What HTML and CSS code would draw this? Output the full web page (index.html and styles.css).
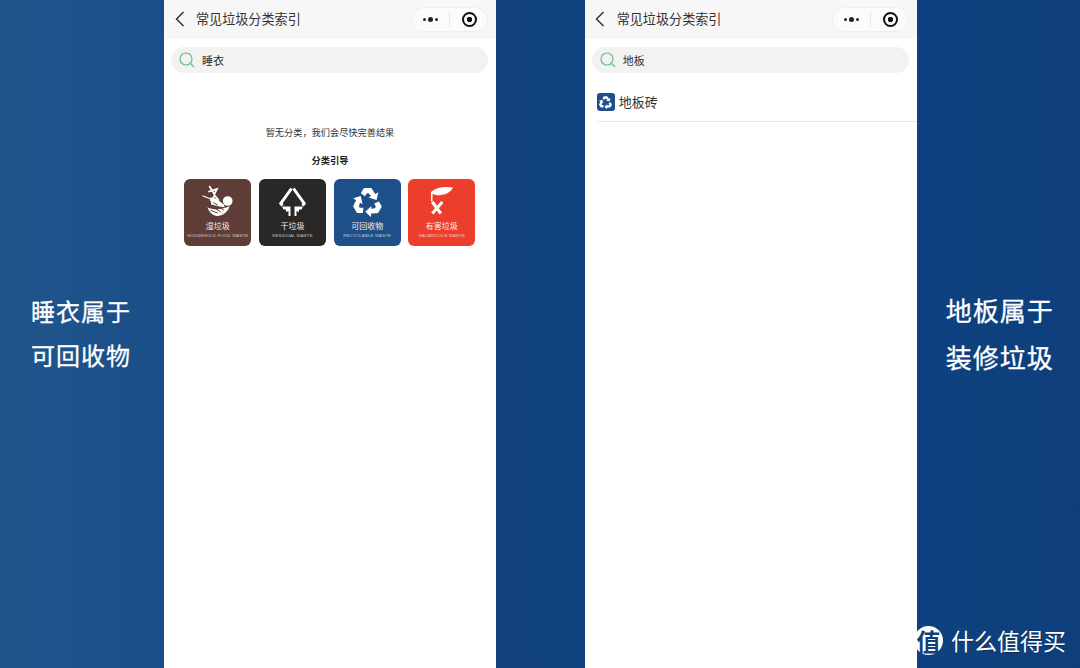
FILE: index.html
```html
<!DOCTYPE html>
<html lang="zh-CN">
  <head>
    <meta charset="UTF-8" />
    <meta name="viewport" content="width=device-width, initial-scale=1.0" />
    <title>常见垃圾分类索引</title>
    <link rel="stylesheet" href="styles.css">
  </head>
  <body>
    <svg class="defs" width="0" height="0">
      <symbol id="recycle" viewBox="0 0 32 30">
        <path id="arm" d="M9.500 7.500L12 3.200Q12.500 2.500 13.500 2.500H19Q20 2.500 20.500 3.500L23.500 8.100 26.500 6.500 24.800 14 17 11.500 19.500 10.100 17 7.500H15.500L13.500 10.500Z" />
        <use href="#arm" transform="rotate(120 16 16.500)" />
        <use href="#arm" transform="rotate(240 16 16.500)" />
      </symbol>
    </svg>

    <main class="page">
      <div class="side side-left">
        <p>睡衣属于</p>
        <p>可回收物</p>
      </div>

      <section class="phone">
        <header class="nav">
          <svg class="back" width="10" height="16" viewBox="0 0 10 16"><path d="M8.500 1L1.500 8l7 7" /></svg>
          <span class="nav-title">常见垃圾分类索引</span>
          <div class="capsule">
            <span class="dots"><i></i><i class="big"></i><i></i></span>
            <span class="capsule-line"></span>
            <span class="target"></span>
          </div>
        </header>
        <div class="search">
          <svg class="lens" width="16" height="16" viewBox="0 0 16 16"><circle cx="7" cy="7" r="6" /><path d="M11.500 11.500L15 15" /></svg>
          <span>睡衣</span>
        </div>
        <p class="empty">暂无分类，我们会尽快完善结果</p>
        <p class="guide">分类引导</p>
        <div class="cards">
          <div class="card wet">
            <svg class="card-icon" width="34" height="33" viewBox="0 0 34 33">
              <path class="line thick" d="M8 1l5 8M7 7l9-3-3 6 5 6M14 11l-5 5" />
              <path class="line" d="M1 11l15 6" />
              <path d="M9 13l6 1 8 6 1 3-7-1-7-2z" />
              <circle cx="27" cy="16.500" r="5" />
              <path d="M6 23c6 3 14 3 23-1-2 6-7 10-13 10-4 0-8-4-10-9z" />
              <path class="cut" d="M9 26l8 3M14 24l6 4M20 24l3 2M12 18l5 3" />
            </svg>
            <b>湿垃圾</b>
            <small>HOUSEHOLD FOOD WASTE</small>
          </div>
          <div class="card dry">
            <svg class="card-icon" width="29" height="32" viewBox="0 0 29 32">
              <path class="line bar" d="M4.500 20.500L2.800 18.500 13.500 3.500" />
              <path class="line bar" d="M15.500 3.500L26.200 18.500 24.500 20.500" />
              <path d="M4 21.500h8.500V31h-2v-5L8 27v-2.500H5.500z" />
              <path d="M25 21.500h-8.500V31h2v-5l2.500 1v-2.500h2.500z" />
            </svg>
            <b>干垃圾</b>
            <small>RESIDUAL WASTE</small>
          </div>
          <div class="card rec">
            <svg class="card-icon" width="33" height="32"><use href="#recycle" /></svg>
            <b>可回收物</b>
            <small>RECYCLABLE WASTE</small>
          </div>
          <div class="card haz">
            <svg class="card-icon" width="25" height="29" viewBox="0 0 25 29">
              <path d="M2 5.500C7 1 15 -.5 24 1c-2 5-9 8.500-17 7.500L3.500 7.500V15H2z" />
              <path class="line bar" d="M3.300 15.500l8.500 11.500M13.300 15.500L3.300 27" />
            </svg>
            <b>有害垃圾</b>
            <small>HAZARDOUS WASTE</small>
          </div>
        </div>
      </section>

      <div class="gap"></div>

      <section class="phone phone-right">
        <header class="nav">
          <svg class="back" width="10" height="16" viewBox="0 0 10 16"><path d="M8.500 1L1.500 8l7 7" /></svg>
          <span class="nav-title">常见垃圾分类索引</span>
          <div class="capsule">
            <span class="dots"><i></i><i class="big"></i><i></i></span>
            <span class="capsule-line"></span>
            <span class="target"></span>
          </div>
        </header>
        <div class="search">
          <svg class="lens" width="16" height="16" viewBox="0 0 16 16"><circle cx="7" cy="7" r="6" /><path d="M11.500 11.500L15 15" /></svg>
          <span>地板</span>
        </div>
        <div class="result">
          <span class="result-icon"><svg width="15" height="14"><use href="#recycle" /></svg></span>
          <span>地板砖</span>
        </div>
      </section>

      <div class="side side-right">
        <p>地板属于</p>
        <p>装修垃圾</p>
      </div>
    </main>

    <!-- 水印 -->
    <div class="mark">
      <span class="mark-logo">值</span>
      <span class="mark-text">什么值得买</span>
    </div>
  </body>
</html>
```

FILE: styles.css
```css
* {
  box-sizing: border-box;
}
html,
body {
  margin: 0;
  height: 668px;
  overflow: hidden;
}
body {
  position: relative;
  font-family: "Liberation Sans", "Noto Sans CJK SC", sans-serif;
  background: linear-gradient(90deg, #20558c 0%, #1a4e88 15%, #11427f 46%, #0f4180 85%, #0e3f7c 100%);
}
p {
  margin: 0;
}
.defs {
  position: absolute;
}
.page {
  display: flex;
  height: 668px;
}
.side {
  width: 164px;
  display: flex;
  flex-direction: column;
  align-items: center;
  justify-content: center;
  color: #fff;
  font-family: "Noto Sans CJK SC", sans-serif;
  font-size: 24px;
  letter-spacing: 1px;
  line-height: 44px;
  -webkit-text-stroke: 0.3px #fff;
  padding: 0 2px 2px 0;
}
.side-right {
  width: 163.300px;
  font-size: 26px;
  line-height: 47px;
  padding: 0 0 2px 3px;
}
.gap {
  width: 88.700px;
}
.phone {
  width: 332px;
  background: #fff;
  display: flex;
  flex-direction: column;
}

/* 导航栏 */
.nav {
  height: 39px;
  background: #f7f7f7;
  display: flex;
  align-items: center;
  padding: 0 8px 1px 11px;
}
.back {
  fill: none;
  stroke: #333;
  stroke-width: 1.500;
  margin-right: 11px;
}
.phone-right .nav {
  padding-left: 10px;
}
.phone-right .back {
  margin-right: 12px;
}
.nav-title {
  font-family: "Noto Sans CJK SC", sans-serif;
  font-size: 13.100px;
  color: #333;
  flex: 1;
  margin-bottom: 1px;
}
.capsule {
  width: 77px;
  height: 25px;
  margin-top: 1px;
  border-radius: 13px;
  background: #fbfbfb;
  border: 1px solid #efefef;
  display: flex;
  align-items: center;
}
.dots {
  width: 37px;
  display: flex;
  align-items: center;
  justify-content: center;
  gap: 2px;
}
.dots i {
  width: 3px;
  height: 3px;
  border-radius: 50%;
  background: #222;
}
.dots i.big {
  width: 5px;
  height: 5px;
}
.capsule-line {
  width: 1px;
  height: 15px;
  background: #e6e6e6;
}
.target {
  width: 15px;
  height: 15px;
  margin-left: 12px;
  border-radius: 50%;
  border: 2px solid #111;
  background: radial-gradient(circle, #111 0 2.500px, transparent 3px);
}

/* 搜索框 */
.search {
  height: 26px;
  margin: 8px 8px 0 7px;
  border-radius: 13px;
  background: #f2f2f2;
  display: flex;
  align-items: center;
  padding-left: 8px;
  gap: 7px;
  font-family: "Noto Sans CJK SC", sans-serif;
  font-size: 11px;
  color: #333;
}
.lens {
  fill: none;
  stroke: #62c47f;
  stroke-width: 1.200;
}

/* 分类引导 */
.empty {
  margin-top: 51px;
  text-align: center;
  font-family: "Noto Sans CJK SC", sans-serif;
  font-size: 9.200px;
  line-height: 16px;
  color: #333;
}
.guide {
  margin-top: 12px;
  text-align: center;
  font-family: "Noto Sans CJK SC", sans-serif;
  font-size: 9.300px;
  line-height: 16px;
  font-weight: 700;
  color: #222;
}
.cards {
  display: flex;
  gap: 7.700px;
  margin: 11px 0 0 20.300px;
}
.card {
  width: 67px;
  height: 67px;
  border-radius: 6px;
  display: flex;
  flex-direction: column;
  align-items: center;
  color: #f2eeee;
}
.card-icon {
  height: 32px;
  margin-top: 6px;
  fill: #fff;
}
.line {
  fill: none;
  stroke: #fff;
  stroke-width: 1.200;
}
.line.thick {
  stroke-width: 1.800;
}
.line.bar {
  stroke-width: 3;
}
.cut {
  fill: none;
  stroke: #5e3d37;
  stroke-width: 1;
}
.card b {
  font-family: "Noto Sans CJK SC", sans-serif;
  font-weight: 400;
  font-size: 8px;
  line-height: 11px;
  margin-top: 3px;
}
.card small {
  font-family: "Liberation Sans", sans-serif;
  font-size: 4.300px;
  letter-spacing: 0.200px;
  line-height: 6px;
  margin-top: 2px;
  white-space: nowrap;
  opacity: 0.75;
}
.wet {
  background: #5e3d37;
}
.dry {
  background: #2a2826;
}
.rec {
  background: #1d4f88;
}
.haz {
  background: #ed3e2c;
}

/* 搜索结果 */
.result {
  margin: 20px 0 0 12px;
  height: 29px;
  border-bottom: 1px solid #e6e6e6;
  display: flex;
  align-items: flex-start;
  gap: 4px;
  font-family: "Noto Sans CJK SC", sans-serif;
  font-size: 13px;
  line-height: 18px;
  color: #333;
}
.result-icon {
  width: 18px;
  height: 18px;
  border-radius: 3px;
  background: #1d4f88;
  display: flex;
  align-items: center;
  justify-content: center;
  fill: #fff;
}

/* 水印 */
.mark {
  position: absolute;
  left: 914px;
  top: 625px;
  display: flex;
  align-items: center;
  gap: 8px;
  color: #fff;
}
.mark-logo {
  width: 29px;
  height: 29px;
  border-radius: 50%;
  background: #fff;
  color: #123f78;
  font-family: "Noto Sans CJK SC", sans-serif;
  font-weight: 700;
  font-size: 24px;
  line-height: 29px;
  text-align: center;
}
.mark-text {
  font-family: "Noto Sans CJK SC", sans-serif;
  font-size: 23px;
  line-height: 30px;
  white-space: nowrap;
  text-shadow: 0 1px 1px rgba(0, 0, 0, 0.3);
}
```
